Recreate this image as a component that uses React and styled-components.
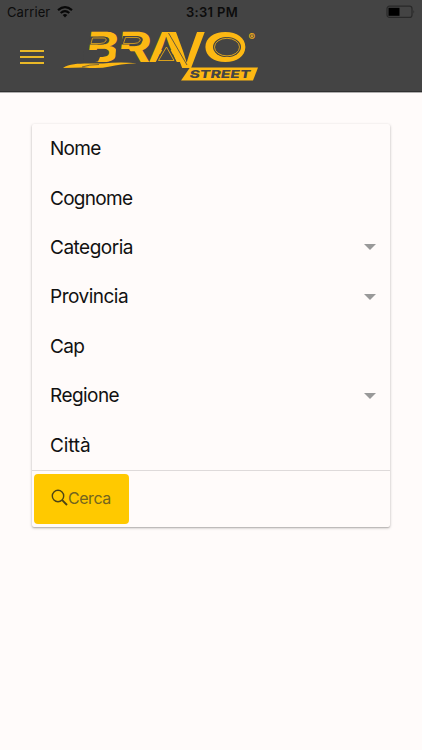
import React from "react";
import styled, { createGlobalStyle } from "styled-components";

const Global = createGlobalStyle`
  *, *::before, *::after { box-sizing: border-box; }
  body { margin: 0; background: #fffbfa; font-family: Inter, "Liberation Sans", sans-serif; }
`;

const Screen = styled.div`
  min-height: 750px;
  background: #fffbfa;
`;

const Header = styled.header`
  height: 92px;
  margin-bottom: 32px;
  background: #444;
  border-bottom: 1px solid #303030;
  box-shadow: 0 1px 0 #b0aeae;
`;

const StatusBar = styled.div`
  display: grid;
  grid-template-columns: 1fr auto 1fr;
  align-items: center;
  height: 24px;
  padding: 0 6px 0 7px;
  color: #0c0c0c;
  font-size: 13px;
  line-height: 24px;
`;

const Carrier = styled.div`
  display: flex;
  align-items: center;
  gap: 7px;
  letter-spacing: 0.1px;
`;

const Clock = styled.div`
  padding-left: 1px;
  font-weight: 600;
  letter-spacing: 0.3px;
`;

const Battery = styled.svg`
  justify-self: end;
`;

const NavBar = styled.nav`
  display: flex;
  height: 66px;
  padding-left: 20px;
`;

const MenuButton = styled.button`
  display: flex;
  flex-direction: column;
  gap: 4px;
  width: 24px;
  margin: 26px 19px 0 0;
  padding: 0;
  border: 0;
  background: none;
`;

const MenuLine = styled.span`
  height: 2px;
  background: #e9b827;
`;

const Logo = styled.svg`
  display: block;
  margin-top: 4px;
  overflow: visible;
`;

const Letter = styled.text`
  font: ${({ $weight = 700 }) => $weight} 40px Inter, sans-serif;
  fill: #fdb813;
`;

const LogoTag = styled.text`
  font: 800 11px Inter, sans-serif;
  fill: #444;
`;

const Mark = styled.text`
  font: 700 10px Inter, sans-serif;
  fill: #fdb813;
`;

const Card = styled.form`
  width: 358px;
  margin-left: 32px;
  border-radius: 2px;
  background: #fffbfa;
  box-shadow: 0 1px 3px rgba(0, 0, 0, 0.26), 0 1px 1px rgba(0, 0, 0, 0.12);
`;

const Field = styled.div`
  display: flex;
  align-items: center;
  justify-content: space-between;
  height: 49.4px;
  padding: 0 14px 0 18px;
  color: #111;
  font-size: 19px;
  letter-spacing: ${({ $tracking = 0 }) => $tracking}px;
`;

const Caret = styled.span`
  border: 6px solid transparent;
  border-top-color: #999;
  border-bottom: 0;
`;

const Footer = styled.div`
  height: 57.2px;
  padding: 3.2px 2px 4px;
  border-top: 1px solid #dedada;
`;

const SearchButton = styled.button`
  display: flex;
  align-items: center;
  width: 95px;
  height: 50px;
  padding: 0 0 2px 17px;
  border: 0;
  border-radius: 4px;
  background: #ffc900;
  color: #73651f;
  font: 400 16px Inter, sans-serif;
  letter-spacing: -0.45px;
`;

const fields = [
  { label: "Nome", tracking: -0.7 },
  { label: "Cognome", tracking: -0.7 },
  { label: "Categoria", select: true, tracking: -0.5 },
  { label: "Provincia", select: true, tracking: -0.5 },
  { label: "Cap", tracking: -0.7 },
  { label: "Regione", select: true, tracking: -0.55 },
  { label: "Città", tracking: -0.15 },
];

function BravoLogo() {
  return (
    <Logo width="197" height="56" viewBox="63 28 197 56" role="img" aria-label="Bravo Street">
      <Letter transform="matrix(1.25 0 -.12 1.04 84.5 62.3)">B</Letter>
      <path d="M83 50H98L100 57L98 61.500L84 64Z" fill="#444" />
      <path d="M90 36.500H104Q109.500 37.500 108 41Q106 44.500 101 44.500H88.500Z" fill="#444" />
      <path d="M92.500 38H103Q107 38 106 41Q104 43.500 100 43.500H91Z" fill="none" stroke="#fdb813" strokeWidth=".7" />
      <Letter transform="matrix(1.28 0 -.1 1.04 116.500 61.8)">R</Letter>
      <path d="M116 49H129L138 63H115Z" fill="#444" />
      <path d="M123 36H138Q144 37 142.500 41Q140 44.500 135 44.500H120.500Z" fill="#444" />
      <path d="M125.500 37.500H137Q141 38 140 41Q138 43.500 134 43.500H123.500Z" fill="none" stroke="#fdb813" strokeWidth=".7" />
      <Letter $weight={600} transform="matrix(1.25 0 0 1.02 148 61.8)">A</Letter>
      <path d="M166.500 42L155.500 62.500H177Z" fill="#444" />
      <path d="M166.500 47L158.500 60.500H174Z" fill="none" stroke="#fdb813" strokeWidth=".8" />
      <Letter $weight={600} transform="matrix(1.34 0 0 1.24 167 68.2)">V</Letter>
      <path d="M168.500 33L187 65" fill="none" stroke="#444" strokeWidth=".8" />
      <path d="M63 68C72 62 88 64 103 63.5Q119 61.5 137 63.2Q119 64.2 110 66.5Q99 69 84 67.500Q73 67.500 63 68Z" fill="#fdb813" />
      <path d="M82 67Q89 64.500 99 64.500" fill="none" stroke="#444" strokeWidth=".7" />
      <Letter transform="matrix(1.47 0 0 1.04 202.8 62)">O</Letter>
      <ellipse cx="227" cy="47.1" rx="14" ry="10" fill="#444" />
      <ellipse cx="227" cy="47.1" rx="12.5" ry="8.8" fill="none" stroke="#fdb813" strokeWidth=".8" />
      <path d="M181 80.5L190 67.5H258L253 80.5Z" fill="#fdb813" />
      <LogoTag transform="translate(189 78.2) skewX(-10)" textLength="61" lengthAdjust="spacingAndGlyphs">STREET</LogoTag>
      <Mark x="248.5" y="41">®</Mark>
    </Logo>
  );
}

export default function App() {
  return (
    <>
      <Global />
      <Screen>
        <Header>
          <StatusBar>
            <Carrier>
              Carrier
              <svg width="16" height="12" viewBox="0 0 16 12" fill="none" stroke="#080808" strokeWidth="2.2">
                <path d="M1 4.2Q8-1.8 15 4.2M3.7 7Q8 3.4 12.3 7" />
                <path d="M5.7 8.9Q8 7 10.3 8.9L8 11.4Z" fill="#080808" stroke="none" />
              </svg>
            </Carrier>
            <Clock>3:31 PM</Clock>
            <Battery width="30" height="14" viewBox="0 0 30 14">
              <rect x="1" y="1.2" width="25" height="11.2" rx="2.5" fill="none" stroke="#292929" strokeWidth="1.2" />
              <rect x="2.5" y="2.8" width="11" height="8" fill="#000" />
              <path d="M27.5 5q1.5 1.8 0 3.6Z" fill="#252525" />
            </Battery>
          </StatusBar>
          <NavBar>
            <MenuButton type="button" aria-label="Menu">
              <MenuLine />
              <MenuLine />
              <MenuLine />
            </MenuButton>
            <BravoLogo />
          </NavBar>
        </Header>
        <Card>
          {fields.map(({ label, select, tracking }) => (
            <Field key={label} $tracking={tracking}>
              {label}
              {select && <Caret />}
            </Field>
          ))}
          <Footer>
            <SearchButton type="button">
              <svg width="17" height="17" viewBox="0 0 17 17" fill="none" stroke="#4c4415" strokeWidth="1.4">
                <circle cx="7" cy="7" r="5.7" />
                <path d="M11.2 11.2L16 16" strokeWidth="1.9" />
              </svg>
              Cerca
            </SearchButton>
          </Footer>
        </Card>
      </Screen>
    </>
  );
}
